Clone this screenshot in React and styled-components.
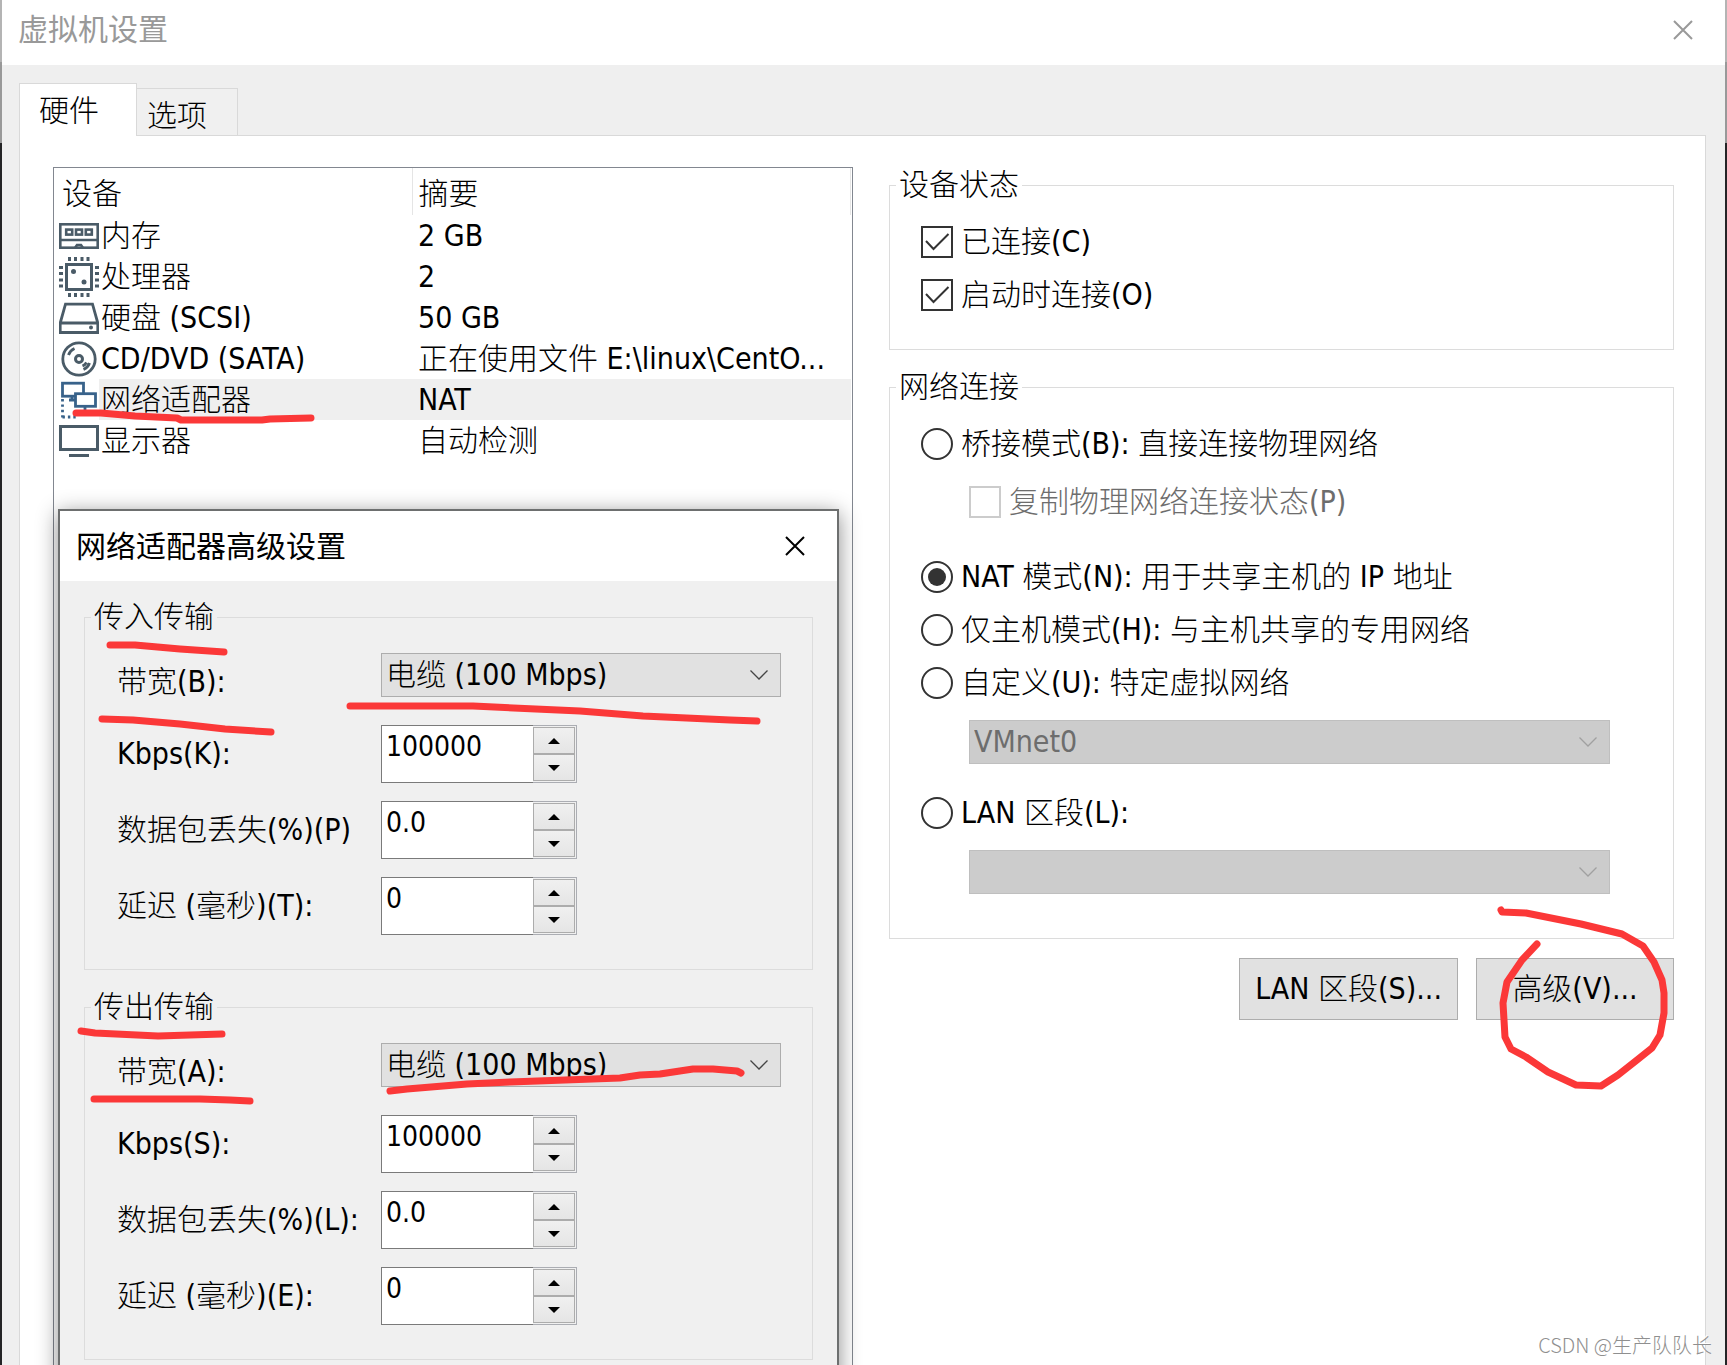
import React, { useId, useState } from 'react'
import styled, { createGlobalStyle } from 'styled-components'

const devices = [
    { name: '内存', summary: '2 GB', icon: 'memory' },
    { name: '处理器', summary: '2', icon: 'cpu' },
    { name: '硬盘 (SCSI)', summary: '50 GB', icon: 'disk' },
    { name: 'CD/DVD (SATA)', summary: '正在使用文件 E:\\linux\\CentO...', icon: 'cd' },
    { name: '网络适配器', summary: 'NAT', icon: 'network', selected: true },
    { name: '显示器', summary: '自动检测', icon: 'display' },
]

const transfers = [
    {
        title: '传入传输',
        bandwidth: '带宽(B):',
        fields: [
            { label: 'Kbps(K):', value: '100000', step: 1, digits: 0 },
            { label: '数据包丢失(%)(P)', value: '0.0', step: 0.1, digits: 1 },
            { label: '延迟 (毫秒)(T):', value: '0', step: 1, digits: 0 },
        ],
    },
    {
        title: '传出传输',
        bandwidth: '带宽(A):',
        fields: [
            { label: 'Kbps(S):', value: '100000', step: 1, digits: 0 },
            { label: '数据包丢失(%)(L):', value: '0.0', step: 0.1, digits: 1 },
            { label: '延迟 (毫秒)(E):', value: '0', step: 1, digits: 0 },
        ],
    },
]

const icons = {
    memory: (
        <g strokeWidth="2.6">
            <rect x="1.3" y="8.3" width="37.4" height="23.4" />
            <path d="M1 24H39" />
            <rect x="7.2" y="13.6" width="6" height="5" />
            <rect x="17" y="13.6" width="6" height="5" />
            <rect x="26.8" y="13.6" width="6" height="5" />
            <path d="M16 32L18 29H22L24 32" />
        </g>
    ),
    cpu: (
        <g>
            <rect x="7.5" y="7.5" width="25" height="25" strokeWidth="3" />
            <circle cx="14.5" cy="14.5" r="2.5" fill="#4a5b67" stroke="none" />
            <circle cx="25" cy="25" r="2.5" fill="#4a5b67" stroke="none" />
            <path strokeWidth="3" d="M10.5 0V4M16.5 0V4M23 0V4M29 0V4M10.5 36V40M16.5 36V40M23 36V40M29 36V40M0 10.5H4M0 16.5H4M0 23H4M0 29H4M36 10.5H40M36 16.5H40M36 23H40M36 29H40" />
        </g>
    ),
    disk: (
        <g strokeWidth="2.8">
            <path d="M1.2 25L6.5 6.2H33.5L38.8 25V34.5H1.2ZM1.2 25H38.8" />
            <circle cx="32" cy="29.5" r="2" fill="#4a5b67" stroke="none" />
        </g>
    ),
    cd: (
        <g strokeWidth="2.8">
            <circle cx="20" cy="20" r="16.2" />
            <circle cx="20" cy="20" r="3.5" strokeWidth="3" />
            <path d="M9.5 16Q11 11.500 15.500 9.500M24.500 30.500Q29 28.500 30.500 24M23.500 27Q26 26 27.500 23.500" />
        </g>
    ),
    network: (
        <g stroke="#38628a" strokeWidth="2.8">
            <rect x="3.500" y="3.200" width="21" height="13" />
            <path d="M10 20H16M13 16V20" />
            <rect x="16.500" y="13.700" width="20" height="12.600" fill="#fff" />
            <path d="M26 27V31M21 32H32" />
            <path strokeDasharray="2.4 3" d="M3.500 19V38.200M3.500 37H18" />
        </g>
    ),
    display: (
        <g>
            <rect x="1.500" y="5.500" width="37" height="23" strokeWidth="3" />
            <path strokeWidth="3" d="M10 34.500H30" />
        </g>
    ),
}

const CloseIcon = () => (
    <svg width="20" height="20" viewBox="0 0 20 20" fill="none" stroke="currentColor" strokeWidth="2" aria-hidden="true">
        <path d="M1 1L19 19M19 1L1 19" />
    </svg>
)

const Choice = ({ type, label, name, checked, disabled }) => (
    <ChoiceRow $disabled={disabled}>
        <Mark>
            <ChoiceInput type={type} name={name} defaultChecked={checked} disabled={disabled} />
            {type === 'checkbox' && (
                <svg width="32" height="32" viewBox="0 0 32 32" fill="none" stroke="#333" strokeWidth="2" aria-hidden="true">
                    <path d="M5 15L12.500 23L27.500 8" />
                </svg>
            )}
        </Mark>
        {label}
    </ChoiceRow>
)

const Combo = ({ options, disabled, id, label }) => (
    <ComboBox $disabled={disabled}>
        <select id={id} aria-label={label} disabled={disabled}>
            {options.map(option => <option key={option}>{option}</option>)}
        </select>
        <svg width="18" height="10" viewBox="0 0 18 10" fill="none" strokeWidth="1.3" aria-hidden="true">
            <path d="M0.500 0.500L9 9L17.500 0.500" />
        </svg>
    </ComboBox>
)

const Spin = ({ id, initial, step, digits }) => {
    const [value, setValue] = useState(initial)
    const move = by => setValue(Math.max(0, Number(value) + by).toFixed(digits))

    return (
        <SpinBox>
            <SpinInput id={id} value={value} onChange={e => setValue(e.target.value)} />
            <SpinButtons>
                <SpinButton type="button" aria-label="+" onClick={() => move(step)}>
                    <svg width="12" height="6" aria-hidden="true"><path d="M0 6L6 0L12 6Z" /></svg>
                </SpinButton>
                <SpinButton type="button" aria-label="-" onClick={() => move(-step)}>
                    <svg width="12" height="6" aria-hidden="true"><path d="M0 0L6 6L12 0Z" /></svg>
                </SpinButton>
            </SpinButtons>
        </SpinBox>
    )
}

const Transfer = ({ title, bandwidth, fields }) => {
    const id = useId()

    return (
        <Group>
            <Legend>{title}</Legend>
            <TransferBody>
                <BandwidthRow>
                    <label htmlFor={id}>{bandwidth}</label>
                    <Combo id={id} options={['电缆 (100 Mbps)']} />
                </BandwidthRow>
                {fields.map((field, i) => (
                    <FieldRow key={field.label}>
                        <label htmlFor={id + i}>{field.label}</label>
                        <Spin id={id + i} initial={field.value} step={field.step} digits={field.digits} />
                    </FieldRow>
                ))}
            </TransferBody>
        </Group>
    )
}

const AdvancedDialog = () => (
    <Dialog role="dialog" aria-label="网络适配器高级设置">
        <DialogTitle>
            <h2>网络适配器高级设置</h2>
            <CloseButton type="button" aria-label="关闭"><CloseIcon /></CloseButton>
        </DialogTitle>
        <DialogBody>
            {transfers.map(transfer => <Transfer key={transfer.title} {...transfer} />)}
        </DialogBody>
    </Dialog>
)

const DeviceTable = () => (
    <Table>
        <thead>
            <tr>
                <th>设备</th>
                <th>摘要</th>
            </tr>
        </thead>
        <tbody>
            {devices.map(({ name, summary, icon, selected }) => (
                <DeviceRow key={name} $selected={selected}>
                    <td>
                        <DeviceName>
                            <svg width="40" height="40" viewBox="0 0 40 40" fill="none" stroke="#4a5b67" aria-hidden="true">
                                {icons[icon]}
                            </svg>
                            {name}
                        </DeviceName>
                    </td>
                    <td>{summary}</td>
                </DeviceRow>
            ))}
        </tbody>
    </Table>
)

const PenMarks = () => (
    <Pen aria-hidden="true">
        <path d="M76 413L101 413L135 416L177 418L181 420L262 420L270 419L311 418" />
        <path d="M110 645L135 645L180 649L224 652" />
        <path d="M102 719L133 720L180 724L225 729L271 732" />
        <path d="M350 706L473 706L580 711L643 716L730 720L757 721" />
        <path d="M81 1031L95 1033L158 1036L222 1034" />
        <path d="M94 1099L200 1099L230 1100L250 1101" />
        <path d="M390 1091L407 1089L467 1084L510 1082L620 1078L640 1075L660 1074L693 1069L713 1069L737 1071L741 1073" />
        <path d="M1501 910L1502 912L1526 913L1581 924L1622 934L1643 946L1654 962L1662 980L1664 993L1664 1013L1660 1035L1652 1048L1637 1060L1618 1075L1601 1086L1576 1085L1548 1072L1526 1057L1511 1049L1505 1037L1503 1003L1507 982L1522 960L1537 944" />
    </Pen>
)

const App = () => (
    <>
        <GlobalStyle />
        <Window>
            <TitleBar>
                <h1>虚拟机设置</h1>
                <CloseButton type="button" aria-label="关闭" $inactive><CloseIcon /></CloseButton>
            </TitleBar>
            <Content>
                <Tabs role="tablist">
                    <Tab type="button" role="tab" aria-selected="true" $active>硬件</Tab>
                    <Tab type="button" role="tab" aria-selected="false">选项</Tab>
                </Tabs>
                <Panel role="tabpanel">
                    <DeviceList>
                        <DeviceTable />
                    </DeviceList>
                    <Settings>
                        <Group>
                            <Legend>设备状态</Legend>
                            <StatusBody>
                                <Choice type="checkbox" label="已连接(C)" checked />
                                <Choice type="checkbox" label="启动时连接(O)" checked />
                            </StatusBody>
                        </Group>
                        <Group>
                            <Legend>网络连接</Legend>
                            <NetworkBody>
                                <Choice type="radio" name="mode" label="桥接模式(B): 直接连接物理网络" />
                                <Replicate>
                                    <Choice type="checkbox" label="复制物理网络连接状态(P)" disabled />
                                </Replicate>
                                <Choice type="radio" name="mode" label="NAT 模式(N): 用于共享主机的 IP 地址" checked />
                                <Choice type="radio" name="mode" label="仅主机模式(H): 与主机共享的专用网络" />
                                <Choice type="radio" name="mode" label="自定义(U): 特定虚拟网络" />
                                <SubControl>
                                    <Combo label="特定虚拟网络" options={['VMnet0']} disabled />
                                </SubControl>
                                <Choice type="radio" name="mode" label="LAN 区段(L):" />
                                <SubControl>
                                    <Combo label="LAN 区段" options={['']} disabled />
                                </SubControl>
                            </NetworkBody>
                        </Group>
                        <Actions>
                            <Button type="button">LAN 区段(S)...</Button>
                            <Button type="button">高级(V)...</Button>
                        </Actions>
                    </Settings>
                </Panel>
            </Content>
            <AdvancedDialog />
            <PenMarks />
            <Watermark>CSDN @生产队队长</Watermark>
        </Window>
    </>
)

export default App

const GlobalStyle = createGlobalStyle`
    * {
        box-sizing: border-box;
    }
    body {
        margin: 0;
        background: linear-gradient(#b4b4b4 62px, #999 62px, #999 143px, #242426 143px);
        color: #000;
        font-family: "DejaVu Sans Condensed", "Noto Sans CJK SC", sans-serif;
        font-size: 30px;
        font-weight: 300;
        line-height: 36px;
    }
    button, input, select {
        font: inherit;
        color: inherit;
    }
    h1, h2 {
        margin: 0;
        padding-bottom: 5px;
        font-family: "Noto Sans CJK SC", sans-serif;
        font-size: 30px;
        font-weight: 400;
    }
`

const Window = styled.main`
    position: relative;
    display: flex;
    flex-direction: column;
    height: 100vh;
    padding: 0 2px;
    overflow: hidden;
`

const TitleBar = styled.header`
    display: flex;
    align-items: center;
    justify-content: space-between;
    height: 65px;
    padding: 0 32px 6px 16px;
    background: #fff;
    color: #999;
`

const CloseButton = styled.button`
    display: flex;
    padding: 0;
    border: 0;
    background: none;
    color: ${({ $inactive }) => ($inactive ? '#999' : '#000')};
`

const Content = styled.div`
    flex: 1;
    display: flex;
    flex-direction: column;
    padding: 18px 19px 0 17px;
    background: #efefef;
`

const Tabs = styled.div`
    display: flex;
    align-items: flex-end;
`

const Tab = styled.button`
    width: ${({ $active }) => ($active ? '118px' : '101px')};
    height: ${({ $active }) => ($active ? '53px' : '47px')};
    margin-bottom: ${({ $active }) => ($active ? '-1px' : '0')};
    padding: ${({ $active }) => ($active ? '2px 0 0 19px' : '8px 0 0 10px')};
    border: 1px solid #d9d9d9;
    border-bottom: 0;
    border-left-width: ${({ $active }) => ($active ? '1px' : '0')};
    background: ${({ $active }) => ($active ? '#fff' : '#f0f0f0')};
    text-align: left;
    z-index: 1;
`

const Panel = styled.section`
    flex: 1;
    display: grid;
    grid-template-columns: minmax(0, 800fr) minmax(0, 785fr);
    gap: 36px;
    padding: 31px 31px 0 33px;
    border: 1px solid #d9d9d9;
    border-bottom: 0;
    background: #fff;
`

const DeviceList = styled.div`
    padding: 0 1px;
    border: 1px solid #828790;
    border-bottom: 0;
`

const Table = styled.table`
    width: 100%;
    table-layout: fixed;
    border-collapse: collapse;

    th, td {
        height: 41px;
        padding: 0 0 0 6px;
        text-align: left;
        font-weight: 300;
        white-space: nowrap;
    }
    th {
        height: 47px;
        padding-top: 4px;
        border-right: 1px solid #e5e5e5;
    }
    th:first-child {
        width: 357px;
        padding-left: 7px;
    }
    td:first-child {
        padding-left: 4px;
    }
`

const DeviceRow = styled.tr`
    background: ${({ $selected }) => ($selected ? 'linear-gradient(to right, #fff 44px, #efefef 44px)' : 'none')};
`

const DeviceName = styled.div`
    display: flex;
    align-items: center;
    gap: 2px;
    height: 41px;
`

const Settings = styled.div`
    display: flex;
    flex-direction: column;
    gap: 19px;
`

const Group = styled.fieldset`
    min-width: 0;
    margin: 0;
    padding: 0;
    border: 1px solid #dcdcdc;
`

const Legend = styled.legend`
    margin-left: 6px;
    padding: 0 3px;
`

const StatusBody = styled.div`
    padding: 12px 31px 28px;
`

const NetworkBody = styled.div`
    padding: 12px 31px 44px;
`

const ChoiceRow = styled.label`
    display: flex;
    align-items: center;
    gap: 8px;
    height: 53px;
    color: ${({ $disabled }) => ($disabled ? '#6d6d6d' : '#000')};
`

const Mark = styled.span`
    display: grid;
    width: 32px;
    height: 32px;

    > * {
        grid-area: 1 / 1;
    }
    svg {
        visibility: hidden;
        pointer-events: none;
    }
    input:checked + svg {
        visibility: visible;
    }
`

const ChoiceInput = styled.input`
    appearance: none;
    display: grid;
    place-items: center;
    width: 32px;
    height: 32px;
    margin: 0;
    border: 2px solid ${({ disabled }) => (disabled ? '#ccc' : '#333')};
    border-radius: ${({ type }) => (type === 'radio' ? '50%' : '0')};
    background: #fff;

    &[type='radio']:checked::after {
        content: '';
        width: 18px;
        height: 18px;
        border-radius: 50%;
        background: #333;
    }
`

const Replicate = styled.div`
    margin: 5px 0 22px;
    padding-left: 48px;
`

const SubControl = styled.div`
    padding: 11px 32px 0 48px;

    + label {
        margin-top: 22px;
    }
`

const ComboBox = styled.div`
    display: grid;
    align-items: center;

    > * {
        grid-area: 1 / 1;
    }
    select {
        appearance: none;
        width: 100%;
        height: 44px;
        padding: 0 36px 0 4px;
        border: 1px solid ${({ $disabled }) => ($disabled ? '#bfbfbf' : '#adadad')};
        border-radius: 0;
        background: ${({ $disabled }) => ($disabled ? '#ccc' : '#e1e1e1')};
        color: ${({ $disabled }) => ($disabled ? '#6d6d6d' : '#000')};
        opacity: 1;
    }
    svg {
        justify-self: end;
        margin-right: 13px;
        stroke: ${({ $disabled }) => ($disabled ? '#a0a0a0' : '#444')};
        pointer-events: none;
    }
`

const Actions = styled.div`
    display: flex;
    justify-content: flex-end;
    gap: 18px;
`

const Button = styled.button`
    min-width: 198px;
    height: 62px;
    padding: 0 15px;
    border: 1px solid #adadad;
    background: #e1e1e1;
`

const Dialog = styled.section`
    position: absolute;
    top: 509px;
    left: 58px;
    width: 781px;
    border: 2px solid #6d6f6f;
    background: #f0f0f0;
    box-shadow: 0 4px 20px rgba(0, 0, 0, 0.45);
`

const DialogTitle = styled.header`
    display: flex;
    align-items: center;
    justify-content: space-between;
    height: 70px;
    padding: 0 32px 0 16px;
    background: #fff;
`

const DialogBody = styled.div`
    display: flex;
    flex-direction: column;
    gap: 19px;
    padding: 18px 24px 90px;
`

const TransferBody = styled.div`
    display: flex;
    flex-direction: column;
    gap: 18px;
    padding: 18px 31px 34px 32px;
`

const FieldRow = styled.div`
    display: grid;
    grid-template-columns: 264px 196px;
    align-items: center;
    height: 58px;
    white-space: nowrap;
`

const BandwidthRow = styled(FieldRow)`
    grid-template-columns: 264px 1fr;
    margin-bottom: -4px;

    > div {
        align-self: start;
    }
`

const SpinBox = styled.div`
    display: flex;
    height: 58px;
`

const SpinInput = styled.input`
    flex: 1;
    min-width: 0;
    padding: 0 4px 14px;
    border: 1px solid #7a7a7a;
    border-right: 0;
    border-radius: 0;
    background: #fff;
    font-size: 28px;
`

const SpinButtons = styled.div`
    display: grid;
    width: 44px;
    padding: 1px 1px 1px 0;
    border: 1px solid #abadb3;
    border-left: 0;
    background: #f0f0f0;
`

const SpinButton = styled.button`
    display: grid;
    place-items: center;
    padding: 0;
    border: 1px solid #acacac;
    background: linear-gradient(#f0f0f0, #e5e5e5);
`

const Pen = styled.svg`
    position: absolute;
    top: 0;
    left: 0;
    width: 100%;
    height: 100%;
    fill: none;
    stroke: #fb3838;
    stroke-width: 7;
    stroke-linecap: round;
    stroke-linejoin: round;
    pointer-events: none;
`

const Watermark = styled.div`
    position: absolute;
    right: 15px;
    bottom: 2px;
    color: #8f8f8f;
    font-family: "Noto Sans CJK SC", sans-serif;
    font-size: 20px;
    text-shadow: -1px -1px 0 #fff;
`
